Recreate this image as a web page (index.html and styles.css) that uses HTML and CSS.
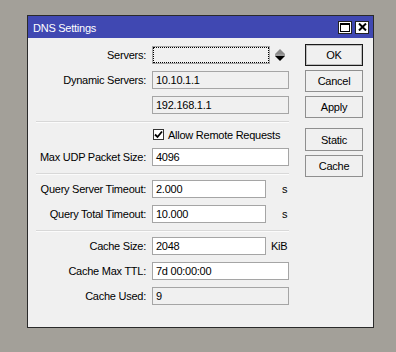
FILE: index.html
```html
<!DOCTYPE html>
<html>
<head>
    <meta charset="UTF-8">
    <title>DNS Settings</title>
    <link rel="stylesheet" href="styles.css">
</head>
<body>
    <div class="window">
        <div class="titlebar">
            <span class="title">DNS Settings</span>
            <div class="tb-btns">
                <span class="tb-btn">
                    <svg width="10" height="9" viewBox="0 0 10 9"><rect x="0.5" y="0.5" width="9" height="8" fill="none" stroke="#000"/><rect x="0" y="0" width="10" height="2" fill="#000"/></svg>
                </span>
                <span class="tb-btn">
                    <svg width="9" height="8" viewBox="0 0 9 8"><path d="M1 0.5 L8 7.5 M8 0.5 L1 7.5" stroke="#000" stroke-width="2"/></svg>
                </span>
            </div>
        </div>
        <div class="content">
            <div class="form">
                <div class="row">
                    <span class="lbl">Servers:</span>
                    <div class="field combo"></div>
                    <svg class="spin" width="10" height="12" viewBox="0 0 10 12">
                        <path d="M5 0 L10 5 L0 5 Z" fill="#8a8a8a"/>
                        <rect x="0" y="5.5" width="10" height="1" fill="#444"/>
                        <path d="M0 7 L10 7 L5 12 Z" fill="#000"/>
                    </svg>
                </div>
                <div class="row">
                    <span class="lbl">Dynamic Servers:</span>
                    <div class="field ro long">10.10.1.1</div>
                </div>
                <div class="row">
                    <span class="lbl"></span>
                    <div class="field ro long">192.168.1.1</div>
                </div>
                <div class="sep"></div>
                <div class="row check-row">
                    <span class="lbl"></span>
                    <span class="checkbox">
                        <svg width="9" height="9" viewBox="0 0 9 9"><path d="M1 4.5 L3.5 7 L8 1.5" fill="none" stroke="#000" stroke-width="1.8"/></svg>
                    </span>
                    <span class="check-text">Allow Remote Requests</span>
                </div>
                <div class="row">
                    <span class="lbl">Max UDP Packet Size:</span>
                    <div class="field long">4096</div>
                </div>
                <div class="sep"></div>
                <div class="row">
                    <span class="lbl">Query Server Timeout:</span>
                    <div class="field short">2.000</div>
                    <span class="unit unit-s">s</span>
                </div>
                <div class="row">
                    <span class="lbl">Query Total Timeout:</span>
                    <div class="field short">10.000</div>
                    <span class="unit unit-s">s</span>
                </div>
                <div class="sep"></div>
                <div class="row">
                    <span class="lbl">Cache Size:</span>
                    <div class="field short">2048</div>
                    <span class="unit">KiB</span>
                </div>
                <div class="row">
                    <span class="lbl">Cache Max TTL:</span>
                    <div class="field long">7d 00:00:00</div>
                </div>
                <div class="row">
                    <span class="lbl">Cache Used:</span>
                    <div class="field ro long">9</div>
                </div>
            </div>
            <div class="buttons">
                <button class="btn default">OK</button>
                <button class="btn">Cancel</button>
                <button class="btn">Apply</button>
                <button class="btn gap">Static</button>
                <button class="btn">Cache</button>
            </div>
        </div>
    </div>
</body>
</html>
```

FILE: styles.css
```css
* {
    box-sizing: border-box;
}

body {
    margin: 0;
    padding: 15px 0 0 27px;
    height: 352px;
    overflow: hidden;
    background: #a3a099;
    font-family: "Liberation Sans", Arial, sans-serif;
    font-size: 11px;
    letter-spacing: -0.25px;
    color: #000;
}

.window {
    width: 347px;
    height: 313px;
    background: #f0f0f0;
    border: 1px solid #2a2a2a;
}

.titlebar {
    height: 22px;
    background: #4048b2;
    display: flex;
    align-items: center;
    justify-content: space-between;
    padding: 0 4px 0 5px;
}

.title {
    color: #fff;
    font-size: 11px;
    padding-top: 1px;
}

.tb-btns {
    display: flex;
    gap: 3px;
}

.tb-btn {
    width: 14px;
    height: 13px;
    background: #fff;
    border: 1px solid #222;
    display: flex;
    align-items: center;
    justify-content: center;
}

.content {
    display: flex;
    padding: 6px 9px 0 0;
}

.form {
    width: 261px;
    margin-top: 2px;
}

.row {
    display: flex;
    align-items: center;
    height: 18px;
    margin-bottom: 7px;
}

.lbl {
    width: 118px;
    flex: none;
    text-align: right;
    margin-right: 6px;
    white-space: nowrap;
}

.field {
    height: 18px;
    border: 1px solid #a5a5a5;
    background: #fff;
    padding: 1px 0 0 3px;
    line-height: 15px;
    white-space: nowrap;
}

.field.ro {
    background: #f0f0f0;
}

.long {
    width: 137px;
}

.short {
    width: 114px;
}

.combo {
    width: 118px;
    background: #f0f0f0;
    outline: 1px dotted #000;
    outline-offset: -2px;
}

.spin {
    margin-left: 5px;
}

.unit {
    margin-left: 5px;
}

.unit-s {
    margin-left: 16px;
}

.sep {
    margin: 3px 0 5px 8px;
    width: 253px;
    border-top: 1px solid #d8d8d8;
    border-bottom: 1px solid #fbfbfb;
}

.check-row {
    height: 13px;
}

.checkbox {
    width: 11px;
    height: 11px;
    border: 1px solid #333;
    background: #fff;
    margin-left: 1px;
    display: flex;
    align-items: center;
    justify-content: center;
}

.check-text {
    margin-left: 4px;
}

.buttons {
    margin-left: 16px;
    display: flex;
    flex-direction: column;
    gap: 4px;
}

.btn {
    width: 58px;
    height: 22px;
    background: #f0f0f0;
    border: 1px solid #8f8f8f;
    font-family: inherit;
    font-size: 11px;
    letter-spacing: -0.25px;
    color: #000;
    padding: 0;
}

.btn.default {
    border-color: #1a1a1a;
    box-shadow: inset 0 0 0 1px #bdbdbd;
}

.btn.gap {
    margin-top: 6px;
    height: 23px;
}
```
